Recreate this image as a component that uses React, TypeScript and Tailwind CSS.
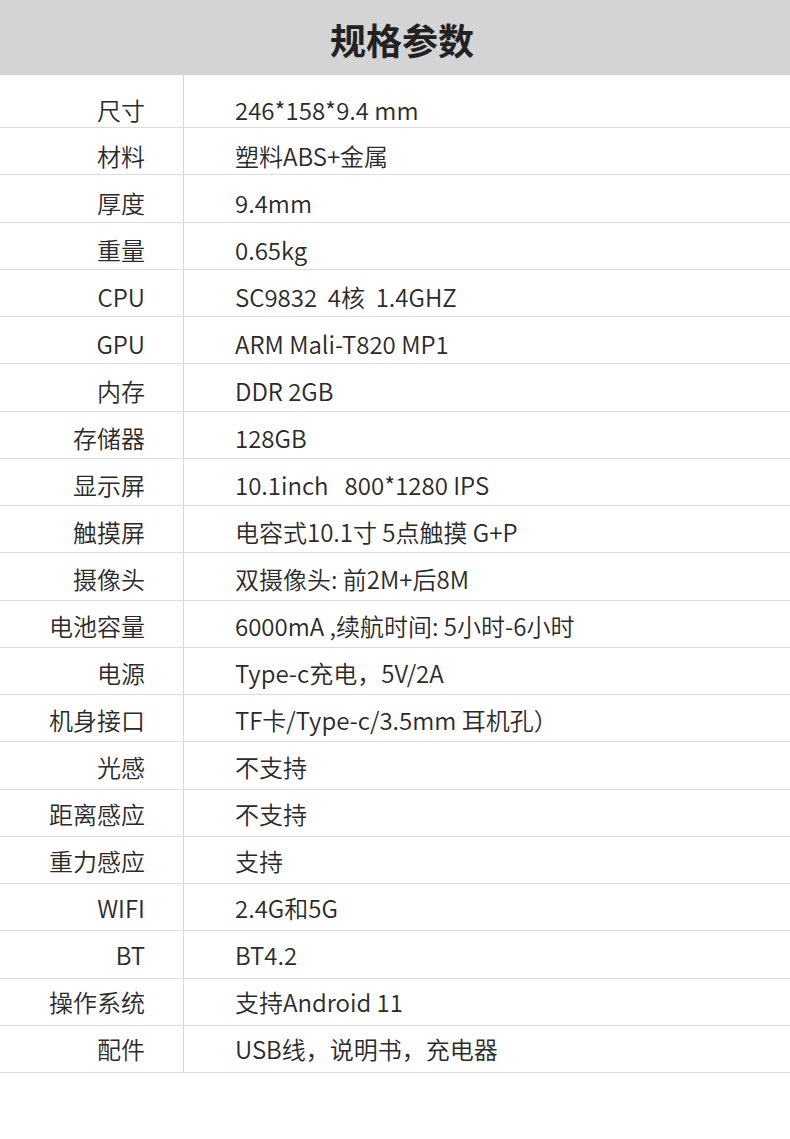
const specs: [string, string][] = [
  ["尺寸", "246*158*9.4 mm"],
  ["材料", "塑料ABS+金属"],
  ["厚度", "9.4mm"],
  ["重量", "0.65kg"],
  ["CPU", "SC9832  4核  1.4GHZ"],
  ["GPU", "ARM Mali-T820 MP1"],
  ["内存", "DDR 2GB"],
  ["存储器", "128GB"],
  ["显示屏", "10.1inch   800*1280 IPS"],
  ["触摸屏", "电容式10.1寸 5点触摸 G+P"],
  ["摄像头", "双摄像头: 前2M+后8M"],
  ["电池容量", "6000mA ,续航时间: 5小时-6小时"],
  ["电源", "Type-c充电，5V/2A"],
  ["机身接口", "TF卡/Type-c/3.5mm 耳机孔）"],
  ["光感", "不支持"],
  ["距离感应", "不支持"],
  ["重力感应", "支持"],
  ["WIFI", "2.4G和5G"],
  ["BT", "BT4.2"],
  ["操作系统", "支持Android 11"],
  ["配件", "USB线，说明书，充电器"],
];

export default function App() {
  return (
    <div className="w-[790px] h-[1139px] bg-white text-[#2a2a2a] font-['Noto_Sans_CJK_SC',sans-serif]">
      <header className="h-[75px] bg-[#d4d4d4] flex items-center justify-center pl-[14px]">
        <h1 className="text-[36px] font-bold text-[#222] pt-[2px]">规格参数</h1>
      </header>

      <div>
        {specs.map(([label, value], i) => {
          // text sits a little low in the upper rows and drifts to centre further down
          const pad = i === 0 ? 17 : 10 - (i - 1) * 0.5;
          return (
            <div
              key={label}
              className={`flex border-b border-[#dcdcdc] text-[24px] font-[350] ${i === 0 ? "h-[53px]" : "h-[47.25px]"}`}
            >
              <div
                className="w-[184px] shrink-0 border-r border-[#d6d6d6] flex items-center justify-end pr-[38px]"
                style={{ paddingTop: pad }}
              >
                {label}
              </div>
              <div className="flex items-center pl-[51px] whitespace-pre" style={{ paddingTop: pad }}>
                {value}
              </div>
            </div>
          );
        })}
      </div>
    </div>
  );
}
